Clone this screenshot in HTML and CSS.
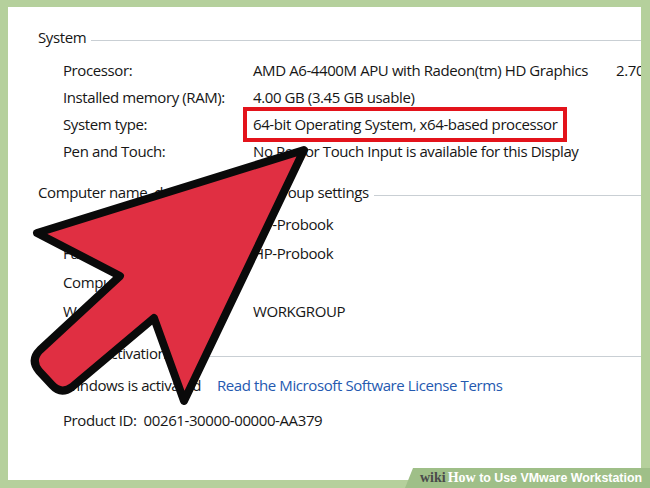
FILE: index.html
```html
<!DOCTYPE html>
<html lang="en">
<head>
<meta charset="utf-8">
<title>How to Use VMware Workstation</title>
<link rel="stylesheet" href="styles.css">
</head>
<body>
<div class="frame">
  <div class="panel">
    <section class="group g-system">
      <div class="ghead"><span class="gtitle">System</span><i class="rule"></i></div>
      <div class="rows rows-sys">
        <span class="lbl">Processor:</span>
        <span class="val">AMD A6-4400M APU with Radeon(tm) HD Graphics<span class="ghz">2.70 GHz</span></span>
        <span class="lbl">Installed memory (RAM):</span>
        <span class="val">4.00 GB (3.45 GB usable)</span>
        <span class="lbl">System type:</span>
        <span class="val"><span class="hl">64-bit Operating System, x64-based processor</span></span>
        <span class="lbl">Pen and Touch:</span>
        <span class="val">No Pen or Touch Input is available for this Display</span>
      </div>
    </section>

    <section class="group g-comp">
      <div class="ghead"><span class="gtitle">Computer name, domain, and workgroup settings</span><i class="rule"></i></div>
      <div class="rows rows-comp">
        <span class="lbl">Computer name:</span>
        <span class="val">HP-Probook</span>
        <span class="lbl">Full computer name:</span>
        <span class="val">HP-Probook</span>
        <span class="lbl">Computer description:</span>
        <span class="val"></span>
        <span class="lbl">Workgroup:</span>
        <span class="val">WORKGROUP</span>
      </div>
    </section>

    <section class="group g-act">
      <div class="ghead"><span class="gtitle">Windows activation</span><i class="rule"></i></div>
      <div class="act-line">
        <span>Windows is activated</span>
        <a class="link">Read the Microsoft Software License Terms</a>
      </div>
      <div class="act-line pid">
        <span>Product ID:</span>
        <span>00261-30000-00000-AA379</span>
      </div>
    </section>

    <svg class="arrow" width="633" height="473" viewBox="8 7 633 473" aria-hidden="true">
      <path d="M304,150 L37,233 L120,276 L40,350 Q30,360 39,371 L52,385 Q61,395 72,387 L154,318 L184,401 Z"
            fill="#e02f42" stroke="#0a0a0a" stroke-width="8" stroke-linejoin="round"/>
    </svg>
  </div>

  <div class="wm">
    <span class="wm-wiki">wiki</span><span class="wm-how">How</span><span class="wm-title"> to Use VMware Workstation</span>
  </div>
</div>
</body>
</html>
```

FILE: styles.css
```css
html, body {
  margin: 0;
  padding: 0;
}

body {
  width: 650px;
  height: 488px;
  overflow: hidden;
  font-family: "Open Sans", "Noto Sans", "DejaVu Sans", sans-serif;
  font-size: 15px;
  letter-spacing: -0.4px;
  color: #161616;
}

.frame {
  position: relative;
  width: 650px;
  height: 488px;
  box-sizing: border-box;
  padding: 7px 9px 8px 8px;
  background: #b5d09c;
}

.panel {
  position: relative;
  height: 100%;
  background: #ffffff;
  overflow: hidden;
  padding: 20px 0 0 30px;
  box-sizing: border-box;
}

.group {
  display: flex;
  flex-direction: column;
}

.g-comp {
  margin-top: 17px;
}

.g-act {
  margin-top: 17px;
}

.ghead {
  display: flex;
  align-items: center;
  gap: 5px;
  height: 21px;
  line-height: 21px;
  white-space: nowrap;
}

.rule {
  flex: 1;
  height: 1px;
  margin-top: 5px;
  background: #c9cfd4;
}

.rows {
  display: grid;
  grid-template-columns: 190px auto;
  padding-left: 25px;
  white-space: nowrap;
}

.rows-sys {
  margin-top: 9px;
  grid-auto-rows: 27px;
  line-height: 27px;
}

.rows-comp {
  margin-top: 7px;
  grid-auto-rows: 29px;
  line-height: 29px;
}

.ghz {
  margin-left: 28px;
}

.hl {
  display: inline-block;
  padding: 0 6px;
  margin-left: -6px;
  line-height: 27px;
  box-shadow: 0 0 0 4px #e3131b;
}

.act-line {
  display: flex;
  gap: 16px;
  padding-left: 25px;
  margin-top: 7px;
  line-height: 29px;
  white-space: nowrap;
}

.act-line.pid {
  gap: 7px;
  margin-top: 6px;
}

.link {
  color: #2459b0;
}

.arrow {
  position: absolute;
  left: 0;
  top: 0;
  overflow: visible;
}

.wm {
  position: absolute;
  right: 0;
  bottom: 0;
  width: 245px;
  height: 20px;
  box-sizing: border-box;
  padding-left: 15px;
  background: #9fbf88;
  clip-path: polygon(8px 0, 100% 0, 100% 100%, 0 100%);
  display: flex;
  align-items: center;
  white-space: nowrap;
  letter-spacing: 0;
}

.wm-wiki {
  font-family: "Liberation Serif", "DejaVu Serif", serif;
  font-weight: bold;
  font-size: 14px;
  color: #4b4b4b;
}

.wm-how {
  font-family: "Liberation Serif", "DejaVu Serif", serif;
  font-weight: bold;
  font-size: 14px;
  color: #ffffff;
  margin-left: 2px;
}

.wm-title {
  font-family: "Liberation Sans", Arial, sans-serif;
  font-weight: bold;
  font-size: 12.4px;
  color: #ffffff;
  white-space: pre;
}
```
